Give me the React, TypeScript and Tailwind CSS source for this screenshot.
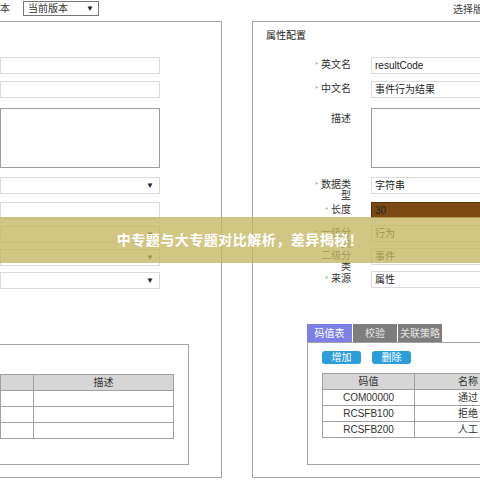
const font = { fontFamily: '"Liberation Sans", "Noto Sans CJK SC", sans-serif' }

function Arrow() {
  return <span className="text-[8px] leading-none text-[#222]">▼</span>
}

function Field({ value = '', select = false, tall = false, className = '' }: { value?: string; select?: boolean; tall?: boolean; className?: string }) {
  if (tall) {
    return <div className={`h-[60px] w-full border border-[#9c9c9c] bg-white ${className}`} />
  }
  return (
    <div className={`flex h-[17px] w-full items-center justify-between border border-[#dadada] bg-white pl-[3px] pr-[5px] text-[10px] text-[#222] ${className}`}>
      <span>{value}</span>
      {select && <Arrow />}
    </div>
  )
}

function Label({ text, required = false, pt = 'pt-[2px]' }: { text: string; required?: boolean; pt?: string }) {
  return (
    <div className={`flex w-[98px] shrink-0 items-start justify-end gap-[3px] ${pt}`}>
      {required && <span className="text-[8px] leading-[11px] text-[#999]">*</span>}
      <span className="max-w-[30px] text-right text-[10px] leading-[11px] text-[#333]">{text}</span>
    </div>
  )
}

// 오른쪽 속성 행
function PropRow({ label, required, children, className = '', pt }: { label: string; required?: boolean; children: React.ReactNode; className?: string; pt?: string }) {
  return (
    <div className={`flex ${className}`}>
      <Label text={label} required={required} pt={pt} />
      <div className="ml-[20px] w-[140px] shrink-0">{children}</div>
    </div>
  )
}

export default function App() {
  return (
    <div className="relative h-[480px] w-[480px] overflow-hidden bg-white" style={font}>
      {/* 상단 바 */}
      <div className="flex h-[21px] items-start justify-between">
        <div className="flex items-center pt-[1px]">
          <span className="w-[23px] text-[10px] leading-[14px] text-[#333]">本</span>
          <div className="flex h-[15px] w-[76px] items-center justify-between border border-[#777] px-[4px] text-[10px] text-[#333]">
            <span>当前版本</span>
            <Arrow />
          </div>
        </div>
        <span className="w-[27px] overflow-hidden whitespace-nowrap pt-[4px] text-[10px] leading-[12px] text-[#444]">选择版本</span>
      </div>

      <div className="flex gap-[30px]">
        {/* 왼쪽 패널 */}
        <div className="flex h-[457px] w-[222px] shrink-0 flex-col border-y border-r border-[#a3a3a3]">
          <div className="flex w-[160px] flex-col">
            <Field className="mt-[35px] h-[16px]" />
            <Field className="mt-[7px]" />
            <Field tall className="mt-[10px]" />
            <Field select className="mt-[9px]" />
            <Field className="mt-[8px] h-[16px]" />
            <Field select className="mt-[7px]" />
            <Field select className="mt-[6px]" />
            <Field select className="mt-[6px]" />
          </div>
          <div className="mt-[55px] h-[121px] w-[189px] border-y border-r border-[#a3a3a3] pt-[29px]">
            <table className="w-[174px] border-collapse text-[10px] text-[#333]">
              <tbody>
                <tr className="h-[16px] bg-[#d6d6d6]">
                  <td className="w-[33px] border border-[#a0a0a0]" />
                  <td className="border border-[#a0a0a0] text-center">描述</td>
                </tr>
                {[0, 1, 2].map((i) => (
                  <tr key={i} className="h-[16px]">
                    <td className="border border-[#a0a0a0]" />
                    <td className="border border-[#a0a0a0]" />
                  </tr>
                ))}
              </tbody>
            </table>
          </div>
        </div>

        {/* 오른쪽 패널 */}
        <div className="flex h-[457px] w-[300px] shrink-0 flex-col border-y border-l border-[#a3a3a3]">
          <div className="pl-[13px] pt-[8px] text-[10px] leading-[12px] text-[#222]">属性配置</div>
          <PropRow label="英文名" required className="mt-[15px]">
            <Field value="resultCode" className="h-[16px]" />
          </PropRow>
          <PropRow label="中文名" required className="mt-[7px]">
            <Field value="事件行为结果" />
          </PropRow>
          <PropRow label="描述" className="mt-[10px]" pt="pt-[5px]">
            <Field tall />
          </PropRow>
          <PropRow label="数据类型" required className="mt-[9px] h-[17px]">
            <Field value="字符串" />
          </PropRow>
          <PropRow label="长度" required className="mt-[8px]">
            <div className="flex h-[16px] items-center border border-[#5a3208] bg-[#7b4a14] pl-[3px] text-[10px] text-[#222]">30</div>
          </PropRow>
          <PropRow label="一级分类" required className="mt-[7px] h-[17px]">
            <Field value="行为" />
          </PropRow>
          <PropRow label="二级分类" className="mt-[6px] h-[17px]">
            <Field value="事件" />
          </PropRow>
          <PropRow label="来源" required className="mt-[6px]">
            <Field value="属性" />
          </PropRow>

          {/* 탭 영역 */}
          <div className="ml-[54px] mt-[36px] flex flex-col">
            <div className="flex h-[18px] gap-[1px] text-[10px]">
              <div className="flex w-[45px] items-center justify-center bg-[#7c7fe3] text-white">码值表</div>
              <div className="flex w-[44px] items-center justify-center bg-[#7d7d7d] text-[#e4e4e4]">校验</div>
              <div className="flex w-[44px] items-center justify-center bg-[#7d7d7d] text-[#e4e4e4]">关联策略</div>
            </div>
            <div className="h-[123px] border-y border-l border-[#a3a3a3] pl-[14px] pt-[8px]">
              <div className="flex gap-[11px]">
                <button className="h-[13px] w-[39px] rounded-[3px] bg-[#2b9dd8] text-[10px] leading-[13px] text-white">增加</button>
                <button className="h-[13px] w-[39px] rounded-[3px] bg-[#2b9dd8] text-[10px] leading-[13px] text-white">删除</button>
              </div>
              <table className="mt-[9px] w-[200px] border-collapse text-[10px] text-[#333]">
                <tbody>
                  <tr className="h-[16px] bg-[#d6d6d6]">
                    <td className="w-[92px] border border-[#a0a0a0] text-center">码值</td>
                    <td className="border border-[#a0a0a0] text-center">名称</td>
                  </tr>
                  {[
                    ['COM00000', '通过'],
                    ['RCSFB100', '拒绝'],
                    ['RCSFB200', '人工'],
                  ].map(([code, name]) => (
                    <tr key={code} className="h-[16px]">
                      <td className="border border-[#a0a0a0] text-center">{code}</td>
                      <td className="border border-[#a0a0a0] text-center">{name}</td>
                    </tr>
                  ))}
                </tbody>
              </table>
            </div>
          </div>
        </div>
      </div>

      {/* 배너 */}
      <div className="absolute left-0 top-[217px] flex h-[46px] w-full items-center justify-center bg-[rgba(196,182,96,0.78)]">
        <span className="text-[14px] font-bold tracking-[0.5px] text-white">中专题与大专题对比解析，差异揭秘！</span>
      </div>
    </div>
  )
}
